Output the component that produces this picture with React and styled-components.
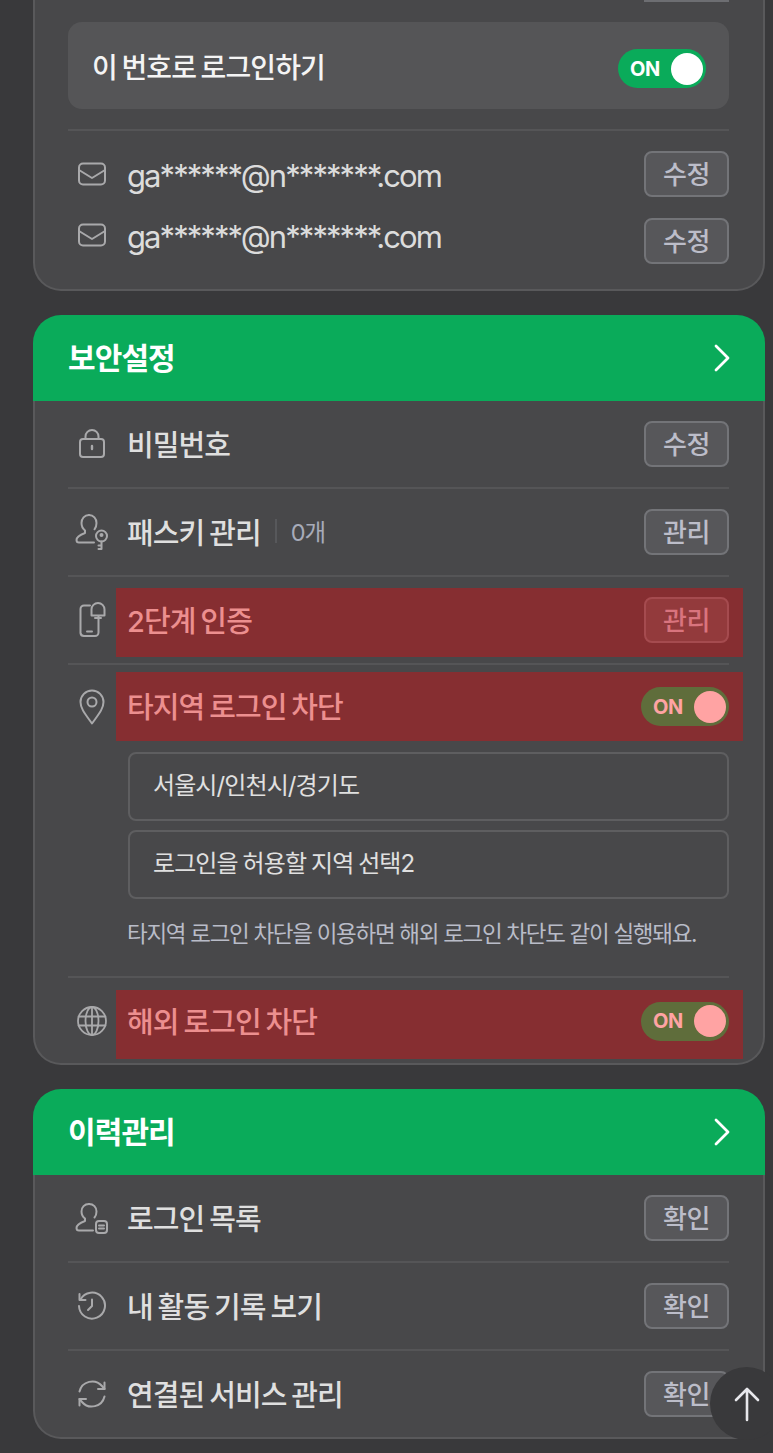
import React from "react";
import styled, { createGlobalStyle } from "styled-components";

const GlobalStyle = createGlobalStyle`
  html, body { margin: 0; padding: 0; background: #39393b; }
  * { box-sizing: border-box; }
  body { font-family: "Inter", "Noto Sans CJK KR", sans-serif; }
`;

const Page = styled.div`
  position: relative;
  width: 773px;
  height: 1453px;
  overflow: hidden;
  padding: 0 8px 0 33px;
  display: flex;
  flex-direction: column;
  gap: 24px;
`;

const Card = styled.section`
  width: 732px;
  flex: none;
`;

const CardHead = styled.header`
  height: 86px;
  padding: 0 34px 4px 35px;
  background: #0aab5a;
  border-radius: 28px 28px 0 0;
  display: flex;
  align-items: center;
  justify-content: space-between;
  color: #fff;
  font-size: 30px;
  font-weight: 700;
  letter-spacing: -0.9px;
  svg { position: relative; top: 2px; }
`;

const Body = styled.div`
  padding: 0 34px 0 33px;
  background: #48484a;
  border: 2px solid #59595b;
  border-top: 0;
  border-radius: 0 0 28px 28px;
`;

const CutEdge = styled.div`
  height: 2px;
  width: 85px;
  margin-left: auto;
  background: #6d6e72;
`;

const LoginBox = styled.div`
  height: 87px;
  margin-top: 20px;
  padding: 0 23px 0 24px;
  background: #555557;
  border-radius: 14px;
  display: flex;
  align-items: center;
  justify-content: space-between;
  color: #f4f4f4;
  font-size: 28px;
  letter-spacing: -0.9px;
  word-spacing: -2px;
  font-weight: 500;
`;

const Line = styled.div`
  height: 2px;
  background: #555557;
  margin-top: 20px;
`;

const Row = styled.div`
  display: grid;
  grid-template-columns: 48px 1fr;
  padding: ${(p) => p.$pad || "20px 0"};
  border-bottom: ${(p) => (p.$last ? "0" : "2px solid #555557")};
`;

const IconCell = styled.div`
  height: ${(p) => p.$h || 46}px;
  padding-bottom: ${(p) => p.$lift || 0}px;
  display: flex;
  align-items: center;
  justify-content: center;
  color: #a9a9ab;
`;

const Content = styled.div`
  min-width: 0;
  height: ${(p) => p.$h || 46}px;
  padding-left: 11px;
  padding-bottom: ${(p) => p.$lift || 0}px;
  display: flex;
  align-items: center;
  justify-content: space-between;
  ${(p) =>
    p.$alert &&
    `
    background: #862e31;
    margin-right: -14px;
    padding-right: 14px;
  `}
`;

const Label = styled.span`
  display: flex;
  align-items: center;
  padding-bottom: 3px;
  font-size: 29px;
  font-weight: 500;
  letter-spacing: -0.9px;
  word-spacing: -2px;
  color: ${(p) => (p.$alert ? "#ec8f8f" : "#dfdfdf")};
`;

const Email = styled.span`
  position: relative;
  top: ${(p) => p.$top}px;
  font-size: 31px;
  letter-spacing: -1.93px;
  color: #dcdcdc;
`;

const Count = styled.span`
  display: inline-flex;
  align-items: center;
  font-size: 23.5px;
  font-weight: 400;
  letter-spacing: -1px;
  color: #a7abb9;
  &::before {
    content: "";
    width: 2px;
    height: 24px;
    background: #57585b;
    margin: 0 14px;
  }
`;

const Btn = styled.button`
  width: 85px;
  height: 46px;
  padding: 0 0 3px;
  font: inherit;
  font-size: 26px;
  font-weight: 500;
  letter-spacing: -0.3px;
  border-radius: 8px;
  border: 2px solid ${(p) => (p.$alert ? "#a54b4f" : "#737478")};
  background: ${(p) => (p.$alert ? "#933a3c" : "#57575a")};
  color: ${(p) => (p.$alert ? "#d9747e" : "#bcbdc9")};
`;

const Toggle = styled.div`
  width: 88px;
  height: 39px;
  margin-top: ${(p) => p.$drop || 0}px;
  border-radius: 20px;
  padding: 0 3px 0 12px;
  background: ${(p) => (p.$alert ? "#5f6d3b" : "#0aab5a")};
  color: ${(p) => (p.$alert ? "#ffa3a3" : "#fff")};
  display: flex;
  align-items: center;
  justify-content: space-between;
  font-size: 20px;
  font-weight: 700;
  letter-spacing: -0.5px;
  &::after {
    content: "";
    width: 32px;
    height: 32px;
    border-radius: 50%;
    background: currentColor;
  }
`;

const SubArea = styled.div`
  grid-column: 2;
  padding: 11px 0 17px 12px;
  display: flex;
  flex-direction: column;
  gap: 9px;
`;

const SelectBox = styled.div`
  height: 69px;
  padding: 0 23px 6px;
  border: 2px solid #5e5e60;
  border-radius: 8px;
  display: flex;
  align-items: center;
  font-size: 24px;
  letter-spacing: -0.9px;
  word-spacing: -1px;
  color: #e0e0e0;
`;

const Note = styled.p`
  margin: 0 0 0 -1px;
  height: 51px;
  font-size: 22.5px;
  line-height: 51px;
  letter-spacing: -1.3px;
  color: #b9bcc8;
  white-space: nowrap;
`;

const TopBtn = styled.button`
  position: absolute;
  left: 710px;
  top: 1367px;
  width: 73px;
  height: 73px;
  padding: 0;
  border: 0;
  border-radius: 50%;
  background: #39393b;
  color: #e8e8ec;
  display: flex;
  align-items: center;
  justify-content: center;
`;

const Svg = ({ w, h, vb, sw = 2, children }) => (
  <svg width={w} height={h} viewBox={vb} fill="none" stroke="currentColor" strokeWidth={sw} strokeLinecap="round" strokeLinejoin="round">
    {children}
  </svg>
);

const Chevron = () => (
  <Svg w={18} h={28} vb="0 0 18 28" sw={2.8}>
    <path d="M3 2l12 12L3 26" />
  </Svg>
);

const MailIcon = () => (
  <Svg w={30} h={24} vb="0 0 30 24">
    <rect x="2" y="1.500" width="26" height="21" rx="4" />
    <path d="M2 8l13 8 13-8" />
  </Svg>
);

const LockIcon = () => (
  <Svg w={28} h={30} vb="0 0 28 30">
    <rect x="2" y="10" width="24" height="18" rx="3" />
    <path d="M7.500 10V7.500a6.500 6.500 0 0 1 13 0V10" />
    <path d="M14 17v3" strokeWidth="2.4" />
  </Svg>
);

const KeyUserIcon = () => (
  <Svg w={34} h={38} vb="0 0 34 38">
    <path d="M14 2c-4.500 0-7.500 3.500-7.500 8 0 3.500 1.600 6 3.500 7.500v2.500C6 21.500 1.500 23.500 1.500 27c0 1.500 1 2.500 2.500 2.500h15" />
    <path d="M21.500 10c0-4.500-3-8-7.500-8M21.500 10c0 2.600-.7 4.700-2 6.300" />
    <circle cx="26.500" cy="23" r="5.500" />
    <circle cx="26.500" cy="22" r="1" />
    <path d="M26.500 28.500v7.500h-3M26.500 32.500h-3" />
  </Svg>
);

const PhoneBellIcon = () => (
  <Svg w={27} h={36} vb="0 0 27 36">
    <path d="M11 4.500H5a3.500 3.500 0 0 0-3.500 3.500v24A3.500 3.500 0 0 0 5 35h11a3.500 3.500 0 0 0 3.500-3.500V15" />
    <path d="M8 30.500h5" />
    <path d="M12.500 14.500v-6a6.500 6.500 0 0 1 13 0v6z" />
    <path d="M16 17h6" />
  </Svg>
);

const PinIcon = () => (
  <Svg w={26} h={36} vb="0 0 26 36">
    <path d="M13 34.500C7 26 1.500 20 1.500 13a11.500 11.500 0 0 1 23 0c0 7-5.500 13-11.500 21.500z" />
    <circle cx="13" cy="13" r="4.500" />
  </Svg>
);

const GlobeIcon = () => (
  <Svg w={32} h={32} vb="0 0 32 32" sw={1.8}>
    <circle cx="16" cy="16" r="14" />
    <ellipse cx="16" cy="16" rx="6.500" ry="14" />
    <path d="M16 2v28M2.500 11.500h27M2.500 20.500h27" />
  </Svg>
);

const UserListIcon = () => (
  <Svg w={34} h={32} vb="0 0 34 32">
    <path d="M14 2c-4.500 0-7.500 3.300-7.500 7.500 0 3.200 1.500 5.500 3.500 7v2.500C6 20.500 1.500 22.500 1.500 26c0 1.500 1 2.500 2.500 2.500h14" />
    <path d="M21.500 9.500c0-4.200-3-7.500-7.500-7.500M21.500 9.500c0 2.600-.8 4.700-2 6" />
    <rect x="21" y="19" width="11" height="12" rx="3" />
    <path d="M24 23.500h5M24 26.500h5" />
  </Svg>
);

const HistoryIcon = () => (
  <Svg w={30} h={30} vb="0 0 30 30">
    <path d="M3.500 8.500A13 13 0 1 1 2 15" />
    <path d="M2.500 3v6h6" />
    <path d="M15 8.500V15l-4 4" />
  </Svg>
);

const RefreshIcon = () => (
  <Svg w={30} h={30} vb="0 0 30 30">
    <path d="M2.500 12.500A13 13 0 0 1 25 7l2.500 3" />
    <path d="M27.500 3.500V10h-6.500" />
    <path d="M27.500 17.500A13 13 0 0 1 5 23l-2.500-3" />
    <path d="M2.500 26.500V20H9" />
  </Svg>
);

const ArrowIcon = () => (
  <Svg w={28} h={36} vb="0 0 28 36" sw={2.6}>
    <path d="M14 34V3M3 14L14 3l11 11" />
  </Svg>
);

export default function App() {
  return (
    <Page>
      <GlobalStyle />
      <Card>
        <Body>
          <CutEdge />
          <LoginBox>
            <span>이 번호로 로그인하기</span>
            <Toggle $drop={6}>ON</Toggle>
          </LoginBox>
          <Line />
          <Row $last $pad="20px 0 0">
            <IconCell><MailIcon /></IconCell>
            <Content>
              <Email $top={1}>ga******@n*******.com</Email>
              <Btn>수정</Btn>
            </Content>
          </Row>
          <Row $last $pad="21px 0 25px">
            <IconCell $lift={12}><MailIcon /></IconCell>
            <Content>
              <Email $top={-5}>ga******@n*******.com</Email>
              <Btn>수정</Btn>
            </Content>
          </Row>
        </Body>
      </Card>

      <Card>
        <CardHead>
          <span>보안설정</span>
          <Chevron />
        </CardHead>
        <Body>
          <Row>
            <IconCell><LockIcon /></IconCell>
            <Content>
              <Label>비밀번호</Label>
              <Btn>수정</Btn>
            </Content>
          </Row>
          <Row>
            <IconCell><KeyUserIcon /></IconCell>
            <Content>
              <Label>패스키 관리<Count>0개</Count></Label>
              <Btn>관리</Btn>
            </Content>
          </Row>
          <Row $pad="11px 0 6px">
            <IconCell $h={69} $lift={8}><PhoneBellIcon /></IconCell>
            <Content $h={69} $lift={5} $alert>
              <Label $alert>2단계 인증</Label>
              <Btn $alert>관리</Btn>
            </Content>
          </Row>
          <Row $pad="7px 0 0">
            <IconCell $h={69}><PinIcon /></IconCell>
            <Content $h={69} $alert>
              <Label $alert>타지역 로그인 차단</Label>
              <Toggle $alert>ON</Toggle>
            </Content>
            <SubArea>
              <SelectBox>서울시/인천시/경기도</SelectBox>
              <SelectBox>로그인을 허용할 지역 선택2</SelectBox>
              <Note>타지역 로그인 차단을 이용하면 해외 로그인 차단도 같이 실행돼요.</Note>
            </SubArea>
          </Row>
          <Row $last $pad="12px 0 4px">
            <IconCell $h={69} $lift={7}><GlobeIcon /></IconCell>
            <Content $h={69} $lift={7} $alert>
              <Label $alert>해외 로그인 차단</Label>
              <Toggle $alert>ON</Toggle>
            </Content>
          </Row>
        </Body>
      </Card>

      <Card>
        <CardHead>
          <span>이력관리</span>
          <Chevron />
        </CardHead>
        <Body>
          <Row>
            <IconCell><UserListIcon /></IconCell>
            <Content>
              <Label>로그인 목록</Label>
              <Btn>확인</Btn>
            </Content>
          </Row>
          <Row>
            <IconCell><HistoryIcon /></IconCell>
            <Content>
              <Label>내 활동 기록 보기</Label>
              <Btn>확인</Btn>
            </Content>
          </Row>
          <Row $last>
            <IconCell><RefreshIcon /></IconCell>
            <Content>
              <Label>연결된 서비스 관리</Label>
              <Btn>확인</Btn>
            </Content>
          </Row>
        </Body>
      </Card>

      <TopBtn><ArrowIcon /></TopBtn>
    </Page>
  );
}
